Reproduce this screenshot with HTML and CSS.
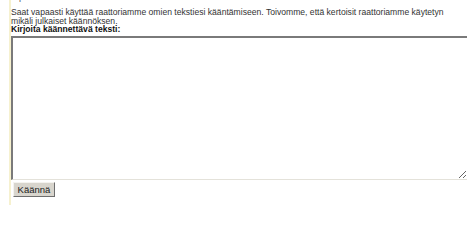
FILE: index.html
```html
<!DOCTYPE html>
<html lang="fi">
<head>
<meta charset="utf-8">
<title>Käännä</title>
<link rel="stylesheet" href="styles.css">
</head>
<body>
<div class="page">
  <p class="prev">j</p>
  <p class="intro">Saat vapaasti käyttää raattoriamme omien tekstiesi kääntämiseen. Toivomme, että kertoisit raattoriamme käytetyn mikäli julkaiset käännöksen.</p>
  <p class="label">Kirjoita käännettävä teksti:</p>
  <textarea class="input"></textarea>
  <div class="actions"><button class="btn" type="button">Käännä</button></div>
</div>
</body>
</html>
```

FILE: styles.css
```css
html, body {
  margin: 0;
  padding: 0;
  background: #ffffff;
}
body {
  font-family: "Liberation Sans", Arial, sans-serif;
  font-size: 8.6px;
  color: #000;
  overflow: hidden;
}
.page {
  margin-left: 9px;
  border-left: 2px solid #f6f1cf;
  height: 205px;
  display: flex;
  flex-direction: column;
}
.prev {
  margin: 0 0 0 8px;
  height: 8px;
  line-height: 9px;
  font-size: 9px;
  color: #555;
  overflow: hidden;
  position: relative;
  top: -6px;
}
.intro {
  margin: 0;
  line-height: 8.5px;
  color: #333;
  width: 448px;
}
.label {
  margin: 0;
  font-weight: bold;
  line-height: 8.5px;
  color: #111;
}
.input {
  box-sizing: border-box;
  width: 457px;
  height: 144px;
  margin: 2px 0 0 0;
  border-top: 2px solid #7a7a7a;
  border-left: 2px solid #7a7a7a;
  border-right: 1px solid #e4e2da;
  border-bottom: 1px solid #e4e2da;
  background: #fff;
  resize: both;
  padding: 0;
}
.actions {
  padding: 2px 0 0 2px;
}
.btn {
  font-family: "Liberation Sans", Arial, sans-serif;
  font-size: 9.5px;
  color: #222;
  background: #d8d5cd;
  border: 1px solid;
  border-color: #f4f3ef #6e6e6e #6e6e6e #f4f3ef;
  padding: 1px 3px;
  height: 15px;
  width: 42px;
  line-height: 11px;
}
```
